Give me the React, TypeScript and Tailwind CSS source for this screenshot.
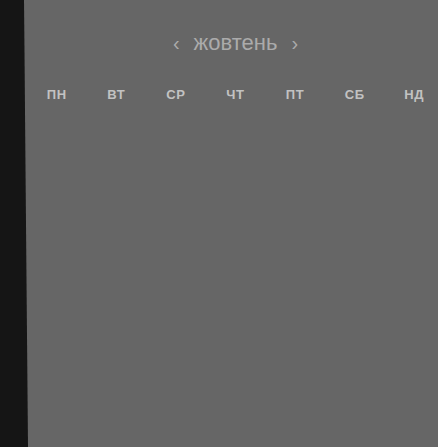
export default function App() {
  const days = ["пн", "вт", "ср", "чт", "пт", "сб", "нд"];

  return (
    <div className="relative h-[447px] w-[438px] overflow-hidden bg-[#151515] font-['Liberation_Sans',Arial,sans-serif]">
      {/* calendar panel */}
      <div className="absolute inset-y-0 left-[24px] w-[440px] bg-[#666666] [clip-path:polygon(0_0,100%_0,100%_100%,4px_100%)] shadow-[-2px_0_3px_rgba(0,0,0,0.5)]">
        <div className="flex w-[420px] flex-col pl-[3px]">
          <div className="flex h-[87px] items-center justify-center gap-[14px] pb-[2px] text-[#ababab]">
            <button className="text-[20px] leading-none">‹</button>
            <span className="text-[22px] leading-none">жовтень</span>
            <button className="text-[20px] leading-none">›</button>
          </div>
          <div className="grid grid-cols-7">
            {days.map((d) => (
              <div
                key={d}
                className="text-center text-[13px] font-bold uppercase tracking-[0.6px] leading-[16px] text-[#c2c2c2]"
              >
                {d}
              </div>
            ))}
          </div>
        </div>
      </div>
    </div>
  );
}
